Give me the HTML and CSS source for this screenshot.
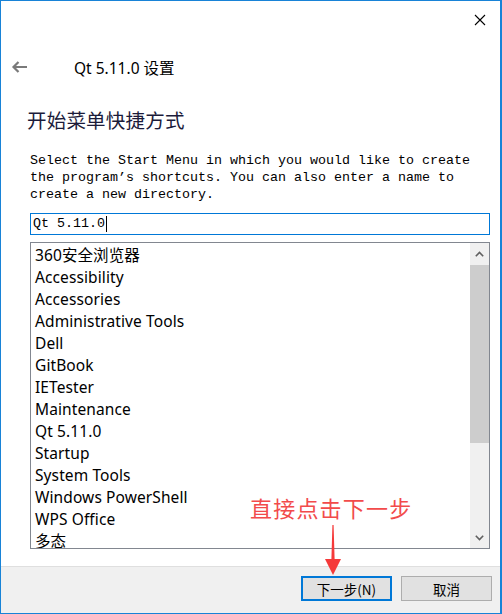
FILE: index.html
```html
<!DOCTYPE html>
<html>
<head>
<meta charset="utf-8">
<link rel="stylesheet" href="styles.css">
</head>
<body>
<div class="window">
  <div class="titlebar">
    <svg class="close" width="12" height="12" viewBox="0 0 12 12"><path d="M1 1L11 11M11 1L1 11" stroke="#000" stroke-width="1.1" fill="none"/></svg>
  </div>
  <div class="header">
    <svg class="back" width="17" height="14" viewBox="0 0 17 14"><path d="M16 7H2.5M7.5 2L2.5 7L7.5 12" stroke="#7a7a7a" stroke-width="2.2" fill="none"/></svg>
    <span class="title">Qt 5.11.0 设置</span>
  </div>
  <div class="content">
    <h1 class="heading">开始菜单快捷方式</h1>
    <p class="desc">Select the Start Menu in which you would like to create<br>the program’s shortcuts. You can also enter a name to<br>create a new directory.</p>
    <div class="input">Qt 5.11.0<span class="caret"></span></div>
    <div class="list">
      <ul class="items">
        <li>360安全浏览器</li>
        <li>Accessibility</li>
        <li>Accessories</li>
        <li>Administrative Tools</li>
        <li>Dell</li>
        <li>GitBook</li>
        <li>IETester</li>
        <li>Maintenance</li>
        <li>Qt 5.11.0</li>
        <li>Startup</li>
        <li>System Tools</li>
        <li>Windows PowerShell</li>
        <li>WPS Office</li>
        <li>多态</li>
      </ul>
      <div class="scrollbar">
        <div class="sb-btn"><svg width="9" height="6" viewBox="0 0 9 6"><path d="M0.8 5.2L4.5 1.5L8.2 5.2" stroke="#606060" stroke-width="1.6" fill="none"/></svg></div>
        <div class="sb-track"><div class="sb-thumb"></div></div>
        <div class="sb-btn"><svg width="9" height="6" viewBox="0 0 9 6"><path d="M0.8 0.8L4.5 4.5L8.2 0.8" stroke="#606060" stroke-width="1.6" fill="none"/></svg></div>
      </div>
    </div>
  </div>
  <div class="footer">
    <button class="btn btn-primary">下一步(N)</button>
    <button class="btn">取消</button>
  </div>
  <div class="annotation">
    <span class="note">直接点击下一步</span>
    <svg class="arrow" width="18" height="52" viewBox="0 0 18 52"><path d="M8.4 0L9.6 0L10.6 34L17 34L9 50L1 34L7.4 34Z" fill="#f53a3a"/></svg>
  </div>
</div>
</body>
</html>
```
FILE: styles.css
```css
* { box-sizing: border-box; }
html, body { margin: 0; padding: 0; background: #fff; }
.window {
  position: relative;
  width: 502px;
  height: 614px;
  border: 1px solid #1883d7;
  border-right-width: 2px;
  display: flex;
  flex-direction: column;
  background: #fff;
  font-family: "Noto Sans", "Noto Sans CJK SC", sans-serif;
}
.titlebar {
  height: 38px;
  display: flex;
  justify-content: flex-end;
  align-items: center;
  padding-right: 14px;
}
.close { display: block; }
.header {
  height: 56px;
  display: flex;
  align-items: center;
  padding-left: 10px;
}
.back { display: block; margin-top: -1px; }
.title {
  margin-left: 46px;
  font-size: 15.5px;
  color: #000;
  font-family: "Noto Sans", "Noto Sans CJK SC", sans-serif;
}
.content {
  flex: 1;
  padding: 0 10px 0 29px;
  display: flex;
  flex-direction: column;
}
.heading {
  margin: 13px 0 0 -3px;
  font-size: 19.5px;
  line-height: 24px;
  font-weight: 400;
  color: #1b1b3a;
  font-family: "Noto Sans CJK SC", sans-serif;
  letter-spacing: 0.2px;
}
.desc {
  margin: 20px 0 0 0;
  font-family: "Liberation Mono", monospace;
  font-size: 13.33px;
  line-height: 17px;
  color: #000;
}
.input {
  margin-top: 10px;
  height: 22px;
  border: 1px solid #0078d7;
  font-family: "Liberation Mono", monospace;
  font-size: 13.33px;
  line-height: 20px;
  padding-left: 2px;
  display: flex;
  align-items: center;
}
.caret {
  display: inline-block;
  width: 1px;
  height: 16px;
  background: #000;
  margin-left: 1px;
}
.list {
  margin-top: 7px;
  height: 307px;
  border: 1px solid #828790;
  display: flex;
  overflow: hidden;
}
.items {
  flex: 1;
  list-style: none;
  margin: 0;
  padding: 1px 0 0 4px;
  overflow: hidden;
}
.items li {
  height: 22px;
  line-height: 22px;
  font-size: 15.5px;
  letter-spacing: 0.1px;
  color: #000;
  white-space: nowrap;
}
.scrollbar {
  width: 19px;
  background: #f0f0f0;
  display: flex;
  flex-direction: column;
}
.sb-btn {
  height: 21px;
  display: flex;
  align-items: center;
  justify-content: center;
}
.sb-track {
  flex: 1;
}
.sb-thumb {
  height: 178px;
  margin-top: 1px;
  background: #cdcdcd;
}
.footer {
  height: 47px;
  margin-top: 16px;
  border-top: 1px solid #dfdfdf;
  background: #f0f0f0;
  display: flex;
  justify-content: flex-end;
  align-items: flex-start;
  padding: 9px 8px 0 0;
  gap: 9px;
}
.btn {
  width: 91px;
  height: 25px;
  border: 1px solid #adadad;
  background: #e1e1e1;
  font-family: "Noto Sans CJK SC", sans-serif;
  font-size: 13.5px;
  color: #000;
  padding: 0;
  margin: 0;
}
.btn-primary {
  border: 2px solid #0078d7;
}
.annotation {
  position: absolute;
  left: 249px;
  top: 491px;
  width: 170px;
  display: flex;
  flex-direction: column;
  align-items: flex-start;
}
.note {
  font-family: "Noto Sans CJK SC", sans-serif;
  font-size: 22px;
  line-height: 30px;
  color: #f24b4b;
  letter-spacing: 1.2px;
}
.arrow {
  margin-left: 74px;
  margin-top: 3px;
}
```
